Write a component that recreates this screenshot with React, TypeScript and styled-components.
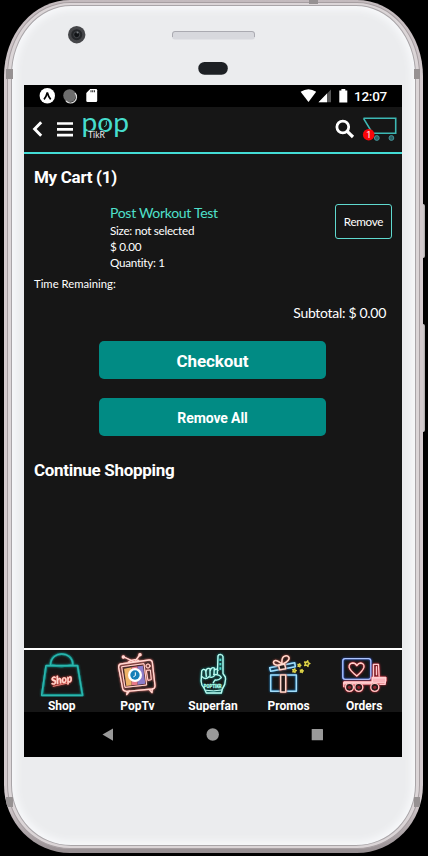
import React from "react";
import styled, { createGlobalStyle } from "styled-components";

const GlobalStyle = createGlobalStyle`
  * { box-sizing: border-box; }
  html, body { margin: 0; padding: 0; background: #000; }
  button { font: inherit; margin: 0; padding: 0; }
`;

const Stage = styled.div`
  position: relative;
  width: 428px;
  height: 856px;
  padding: 0 5px 3px 4px;
  overflow: hidden;
  background: #000;
`;

const SideButton = styled.span<{ $top: number; $height: number }>`
  position: absolute;
  left: 420px;
  top: ${(p) => p.$top}px;
  width: 5px;
  height: ${(p) => p.$height}px;
  border-radius: 0 2px 2px 0;
  background: linear-gradient(90deg, #8d8788, #d5d0d1 60%, #a8a3a4);
`;

const Phone = styled.div`
  position: relative;
  width: 419px;
  height: 853px;
  padding: 2px 3px 4px;
  overflow: hidden;
  border-radius: 66px 66px 66px 66px / 76px 76px 68px 68px;
  background: linear-gradient(180deg, #c3babd 0%, #d3cacd 10%, #d3cacd 94%, #958d90 100%);
`;

const Rim = styled.div`
  height: 100%;
  padding: 2px 3px;
  border: 1px solid #a79fa2;
  border-radius: 63px 63px 63px 63px / 73px 73px 64px 64px;
  background: #dbd5d7;
`;

const Face = styled.div`
  display: flex;
  flex-direction: column;
  height: 100%;
  padding: 0 12px;
  border: 1px solid #a9a5a8;
  border-radius: 60px 60px 60px 60px / 70px 70px 61px 61px;
  background: #ebecee;
  box-shadow: inset 0 0 7px 4px #f7f8fa;
`;

const Antenna = styled.span<{ $left: number; $top: number; $w?: number; $h?: number }>`
  position: absolute;
  left: ${(p) => p.$left}px;
  top: ${(p) => p.$top}px;
  width: ${(p) => p.$w ?? 7}px;
  height: ${(p) => p.$h ?? 10}px;
  background: #969192;
`;

const Forehead = styled.svg`
  display: block;
  flex: none;
  width: 378px;
  height: 79px;
`;

const Screen = styled.main`
  display: flex;
  flex-direction: column;
  flex: none;
  width: 378px;
  height: 672px;
  background: #161616;
  color: #fff;
  font-family: Roboto, sans-serif;
`;

const StatusBar = styled.div`
  display: flex;
  justify-content: space-between;
  flex: none;
  height: 22px;
  background: #000;
`;

const StatusRight = styled.div`
  display: flex;
`;

const Clock = styled.span`
  width: 48px;
  font-size: 13.5px;
  font-weight: 500;
  line-height: 23px;
  letter-spacing: -0.25px;
`;

const Header = styled.header`
  display: flex;
  justify-content: space-between;
  flex: none;
  height: 47px;
  border-bottom: 2px solid #43dcd5;
`;

const Glyphs = styled.svg`
  display: block;
  overflow: visible;
`;

const Content = styled.section`
  flex: 1;
  padding: 11px 10px 0;
`;

const Heading = styled.h1`
  margin: 0;
  height: 24px;
  font-size: 17px;
  font-weight: 700;
  line-height: 24px;
  letter-spacing: -0.3px;
  white-space: nowrap;
`;

const CartItem = styled.article`
  display: flex;
  justify-content: space-between;
  height: 86px;
  padding: 15px 0 0 76px;
  font-family: Lato, "Noto Sans", sans-serif;
`;

const ItemName = styled.div`
  font-size: 14px;
  line-height: 18px;
  height: 18px;
  letter-spacing: -0.3px;
  color: #4fe0cb;
`;

const ItemLine = styled.div`
  font-size: 11.7px;
  line-height: 16px;
  letter-spacing: -0.28px;
`;

const RemoveButton = styled.button`
  width: 57px;
  height: 35px;
  border: 1px solid #5fd9cf;
  border-radius: 3px;
  background: transparent;
  color: #fff;
  font-size: 11.7px;
  line-height: 33px;
  letter-spacing: -0.3px;
`;

const TimeRemaining = styled.div`
  height: 18px;
  font: 11.3px/18px Lato, "Noto Sans", sans-serif;
`;

const Subtotal = styled.div`
  margin-top: 10px;
  padding-right: 6px;
  height: 20px;
  text-align: right;
  letter-spacing: -0.3px;
  font: 14px/19px Lato, "Noto Sans", sans-serif;
`;

const Actions = styled.div`
  display: flex;
  flex-direction: column;
  align-items: center;
  gap: 19px;
  margin: 18px 0 22px;
  padding-right: 1px;
`;

const ActionButton = styled.button<{ $size: number }>`
  width: 227px;
  height: 38px;
  border: 0;
  border-radius: 5px;
  background: #018b84;
  color: #fff;
  font-size: ${(p) => p.$size}px;
  font-weight: 700;
  line-height: 40px;
  letter-spacing: -0.1px;
`;

const TabBar = styled.nav`
  display: grid;
  grid-template-columns: repeat(5, 1fr);
  flex: none;
  height: 64px;
  border-top: 2px solid #fff;
`;

const Tab = styled.div`
  display: flex;
  flex-direction: column;
  align-items: center;
  padding-top: 1px;
`;

const TabIcon = styled.svg`
  display: block;
  width: 70px;
  height: 46px;
  fill: none;
  stroke-linecap: round;
  stroke-linejoin: round;
`;

const TabLabel = styled.span`
  height: 15px;
  font-size: 12px;
  font-weight: 700;
  line-height: 18px;
`;

const SystemNav = styled.div`
  flex: none;
  height: 45px;
  background: #000;
`;

const Glow = styled.g<{ $color: string }>`
  stroke: #fff;
  filter: drop-shadow(0 0 2px ${(p) => p.$color}) drop-shadow(0 0 3px ${(p) => p.$color});
`;

const ShopIcon = () => (
  <TabIcon viewBox="20.4 33 210 138">
    <Glow $color="#127a76">
      <g stroke="#159c95" strokeWidth="6">
        <path d="M78 77H172L187 166H65Z" />
        <path d="M91 74C92 31 157 31 158 74Q125 84 91 74Z" />
      </g>
      <g stroke="#55d8ce" strokeWidth="1.5">
        <path d="M78 77H172L187 166H65Z" />
        <path d="M91 74C92 31 157 31 158 74" />
      </g>
    </Glow>
    <Glow $color="#d8403a">
      <text x="93" y="130" fill="#ffd9cf" stroke="#ffd9cf" strokeWidth="1" fontFamily="Lato" fontStyle="italic" fontWeight="700" fontSize="32" textLength="63" lengthAdjust="spacingAndGlyphs" transform="rotate(-8 124 120)">Shop</text>
      <path d="M99 139L143 129" stroke="#ffaaa0" strokeWidth="2" />
    </Glow>
  </TabIcon>
);

const TvIcon = () => (
  <TabIcon viewBox="247 33 210 138">
    <Glow $color="#d96e69">
      <g stroke="#ffd8d2" strokeWidth="4">
        <path d="M303 72L388 60Q396 59 398 67L406 137Q406 146 398 147L321 154Q311 154 309 146L297 83Q296 74 303 72Z" />
        <path d="M307 80L373 71L381 135L317 142Z" strokeWidth="3" />
        <path d="M342 65L313 51M346 64L360 45M326 66Q344 54 357 62" />
        <path d="M323 155L321 164L329 153M389 149L397 158L398 147" />
        <circle cx="385" cy="78" r="6" strokeWidth="3" />
        <path d="M381 91L392 90L395 119L386 121Z" strokeWidth="3" />
        <circle cx="311" cy="51" r="3" fill="#ffd8d2" />
        <circle cx="361" cy="44" r="3" fill="#ffd8d2" />
      </g>
    </Glow>
    <path d="M313 86L336 82V136L320 138Z" fill="#eeb268" />
    <path d="M336 82L354 79V134L336 136Z" fill="#e9798a" />
    <path d="M354 79L370 77L377 131L354 134Z" fill="#8d7cc9" />
    <circle cx="346" cy="105" r="21" fill="#fff" />
    <circle cx="346" cy="105" r="14" fill="#147fb8" />
    <path d="M347 98V107L342 110" stroke="#fff" strokeWidth="3" />
  </TabIcon>
);

const FanIcon = () => (
  <TabIcon viewBox="84 33 210 138">
    <Glow $color="#168f8b">
      <g stroke="#bff8ed" strokeWidth="4">
        <path d="M202 101L204 48Q205 43 211 43Q218 44 219 50V101L226 111Q229 130 217 147L214 159H169L162 144Q151 133 154 116L155 93Q159 84 167 91L169 109M168 94Q170 82 180 86V107M181 92Q184 80 193 84L192 104M193 91Q199 84 204 91" />
        <path d="M191 103Q211 103 214 113Q206 122 195 120L190 128M156 110Q166 121 177 110Q188 116 195 105" />
        <path d="M168 151Q190 155 215 150" strokeWidth="3" />
        <path d="M211 56V95" stroke="#4ed7c8" strokeWidth="5" strokeDasharray="7 6" strokeLinecap="butt" />
      </g>
    </Glow>
    <text x="161" y="143" fontFamily="Roboto" fontWeight="900" fontSize="15" fill="#9df7e7" stroke="#9df7e7" strokeWidth="1" textLength="54" lengthAdjust="spacingAndGlyphs">POPTIKR</text>
  </TabIcon>
);

const star = (x: number, y: number, r: number) =>
  Array.from({ length: 10 }, (_, i) => {
    const a = (i * Math.PI) / 5 - 1.3;
    const q = i % 2 ? r * 0.5 : r;
    return `${x + q * Math.cos(a)},${y + q * Math.sin(a)}`;
  }).join(" ");

const GiftIcon = () => (
  <TabIcon viewBox="-19 33 210 138">
    <Glow $color="#1770af">
      <g stroke="#a4ddf7" strokeWidth="4.5">
        <path d="M31 105H108V154H31Z" />
        <path d="M28 83L103 68L105 80L31 94Z" />
      </g>
    </Glow>
    <Glow $color="#a34b3f">
      <g stroke="#ffd9cd" strokeWidth="4.5">
        <path d="M61 105H76V156H61ZM55 76L73 73L76 86L58 89Z" fill="#251b1a" />
        <path d="M63 73C48 79 37 73 40 65Q43 58 55 65L65 72Q63 50 74 48Q82 46 85 51Q91 60 68 72" />
      </g>
    </Glow>
    <g stroke="#e0d548" strokeWidth="4" fill="#453f16">
      <polygon points={star(140, 71, 9)} />
      <polygon points={star(117, 76, 5)} />
      <polygon points={star(102, 92, 6)} />
      <polygon points={star(124, 93, 5)} />
    </g>
  </TabIcon>
);

const TruckIcon = () => (
  <TabIcon viewBox="207.6 33 210 138">
    <Glow $color="#2d52bd">
      <rect x="249" y="56" width="84" height="62" rx="7" stroke="#aec6ff" strokeWidth="4" />
    </Glow>
    <Glow $color="#d22e3d">
      <path d="M291 108Q270 91 268 82Q267 70 279 69Q287 69 291 77Q296 69 303 69Q315 71 312 83Q309 93 291 108Z" stroke="#ffd0ca" strokeWidth="4" />
      <path d="M253 126H337V112H378V123M341 109V73H356L358 108M350 80V104M376 126V133H360M252 128V140" stroke="#ffc7ca" strokeWidth="4" />
      <path d="M339 114H377V129H339ZM253 127H336V132H253Z" fill="#f9b3ba" stroke="#ffd3d5" strokeWidth="3" />
      <g fill="#28191b" stroke="#ffc5c4" strokeWidth="4">
        <circle cx="269" cy="142" r="12" />
        <circle cx="297" cy="142" r="12" />
        <circle cx="345" cy="142" r="12" />
      </g>
      <g fill="#8f202b" stroke="none">
        <circle cx="269" cy="142" r="5" />
        <circle cx="297" cy="142" r="5" />
        <circle cx="345" cy="142" r="5" />
      </g>
    </Glow>
  </TabIcon>
);

const tabs = [
  { label: "Shop", Icon: ShopIcon },
  { label: "PopTv", Icon: TvIcon },
  { label: "Superfan", Icon: FanIcon },
  { label: "Promos", Icon: GiftIcon },
  { label: "Orders", Icon: TruckIcon },
];

export default function App() {
  return (
    <>
      <GlobalStyle />
      <Stage>
        <SideButton $top={204} $height={54} />
        <SideButton $top={324} $height={108} />
        <Phone>
          <Rim>
            <Face>
              <Forehead viewBox="24 6 378 79">
                <circle cx="76.7" cy="34.7" r="8.7" fill="#454649" />
                <circle cx="76.7" cy="34.7" r="5.5" fill="#25272a" />
                <circle cx="76.7" cy="34.7" r="3" fill="#111316" stroke="#55585c" strokeWidth="0.7" />
                <circle cx="77.5" cy="32.5" r="1" fill="#777a7d" />
                <rect x="172" y="31" width="83" height="8.5" rx="3" fill="#d7d8dd" />
                <path d="M172.5 37V34Q172.5 31.5 175 31.5H252Q254.5 31.5 254.5 34V37" fill="none" stroke="#aaaab1" />
                <rect x="198.3" y="62" width="29.5" height="12.8" rx="6.2" fill="#1d2024" />
              </Forehead>
              <Screen>
                <StatusBar>
                  <Glyphs width="80" height="22" viewBox="24 85 80 22">
                    <circle cx="47.3" cy="95.8" r="7.7" fill="#fff" />
                    <path d="M44 99.3Q46.2 97 47.3 92.5Q48.5 97 50.7 99.3" fill="none" stroke="#000" strokeWidth="1.7" />
                    <circle cx="69.6" cy="95.6" r="6.4" fill="#6c6c6c" />
                    <path d="M75 93A6 6 0 0 1 66 101" fill="none" stroke="#d8d8d8" strokeWidth="1.2" />
                    <path d="M90.2 89H96Q97.2 89 97.2 90.3V100.5Q97.2 102 96 102H87.5Q86.3 102 86.3 100.5V93Z" fill="#fff" />
                    <path d="M90.5 91.2H95.5" stroke="#222" strokeWidth="2" strokeDasharray="1 .7" />
                  </Glyphs>
                  <StatusRight>
                    <Glyphs width="55" height="22" viewBox="299 85 55 22">
                      <path d="M300.6 91.8Q308.5 86.5 316.2 91.8L308.5 102Z" fill="#fff" />
                      <path d="M318.5 102.2L331 89.5V102.2Z" fill="#555" />
                      <path d="M318.5 102.2L327 93.6V102.2Z" fill="#fff" />
                      <path d="M339.3 90.5H341.4V89H345.3V90.5H347.3V102.4H339.3Z" fill="#fff" />
                    </Glyphs>
                    <Clock>12:07</Clock>
                  </StatusRight>
                </StatusBar>
                <Header>
                  <Glyphs width="116" height="45" viewBox="24 107 116 45">
                    <path d="M41.2 122.2L34.6 129L41.2 135.8" fill="none" stroke="#fff" strokeWidth="2.9" />
                    <path d="M57 123.5H73M57 129.3H73M57 135.2H73" stroke="#fff" strokeWidth="2.7" />
                    <text x="81.5" y="131.8" fontFamily="Lato" fontSize="27" fill="#46ddcd" textLength="47.5" lengthAdjust="spacingAndGlyphs">pop</text>
                    <path d="M106.3 121V125L104.3 127" fill="none" stroke="#46ddcd" strokeWidth="1" />
                    <text x="88" y="138.2" fontFamily="Lato" fontSize="9" fill="#f0f0f0" stroke="#161616" strokeWidth="1.2" paintOrder="stroke" textLength="17" lengthAdjust="spacingAndGlyphs">TikR</text>
                  </Glyphs>
                  <Glyphs width="80" height="45" viewBox="322 107 80 45">
                    <circle cx="342.8" cy="127" r="5.9" fill="none" stroke="#fff" strokeWidth="2.8" />
                    <path d="M347.2 131.3L353 137" stroke="#fff" strokeWidth="3.2" />
                    <path d="M363.5 118.3H395.7V133.2H372.5L363.5 118.3" fill="none" stroke="#3db8b4" strokeWidth="1.6" />
                    <circle cx="376.8" cy="138" r="2.4" fill="#2a6165" stroke="#459399" strokeWidth="1" />
                    <circle cx="391.4" cy="138" r="2.4" fill="#2a6165" stroke="#459399" strokeWidth="1" />
                    <circle cx="368.7" cy="134.7" r="5.8" fill="#f90509" />
                    <text x="368.7" y="138" textAnchor="middle" fontFamily="Roboto" fontSize="9" fill="#fff">1</text>
                  </Glyphs>
                </Header>
                <Content>
                  <Heading>My Cart (1)</Heading>
                  <CartItem>
                    <div>
                      <ItemName>Post Workout Test</ItemName>
                      <ItemLine>Size: not selected</ItemLine>
                      <ItemLine>$ 0.00</ItemLine>
                      <ItemLine>Quantity: 1</ItemLine>
                    </div>
                    <RemoveButton>Remove</RemoveButton>
                  </CartItem>
                  <TimeRemaining>Time Remaining:</TimeRemaining>
                  <Subtotal>Subtotal: $ 0.00</Subtotal>
                  <Actions>
                    <ActionButton $size={17}>Checkout</ActionButton>
                    <ActionButton $size={14}>Remove All</ActionButton>
                  </Actions>
                  <Heading as="h2">Continue Shopping</Heading>
                </Content>
                <TabBar>
                  {tabs.map(({ label, Icon }) => (
                    <Tab key={label}>
                      <Icon />
                      <TabLabel>{label}</TabLabel>
                    </Tab>
                  ))}
                </TabBar>
                <SystemNav>
                  <Glyphs width="378" height="45" viewBox="24 712 378 45" fill="#999">
                    <path d="M102.5 734.5L113 728.5V740.8Z" />
                    <circle cx="212.7" cy="734.5" r="6.2" />
                    <rect x="311.7" y="729" width="11.3" height="11.3" rx="0.5" />
                  </Glyphs>
                </SystemNav>
              </Screen>
            </Face>
          </Rim>
          <Antenna $left={2} $top={69} />
          <Antenna $left={410} $top={69} $w={6} />
          <Antenna $left={2} $top={797} />
          <Antenna $left={410} $top={797} $w={6} />
          <Antenna $left={305} $top={0} $w={9} $h={4} />
        </Phone>
      </Stage>
    </>
  );
}
